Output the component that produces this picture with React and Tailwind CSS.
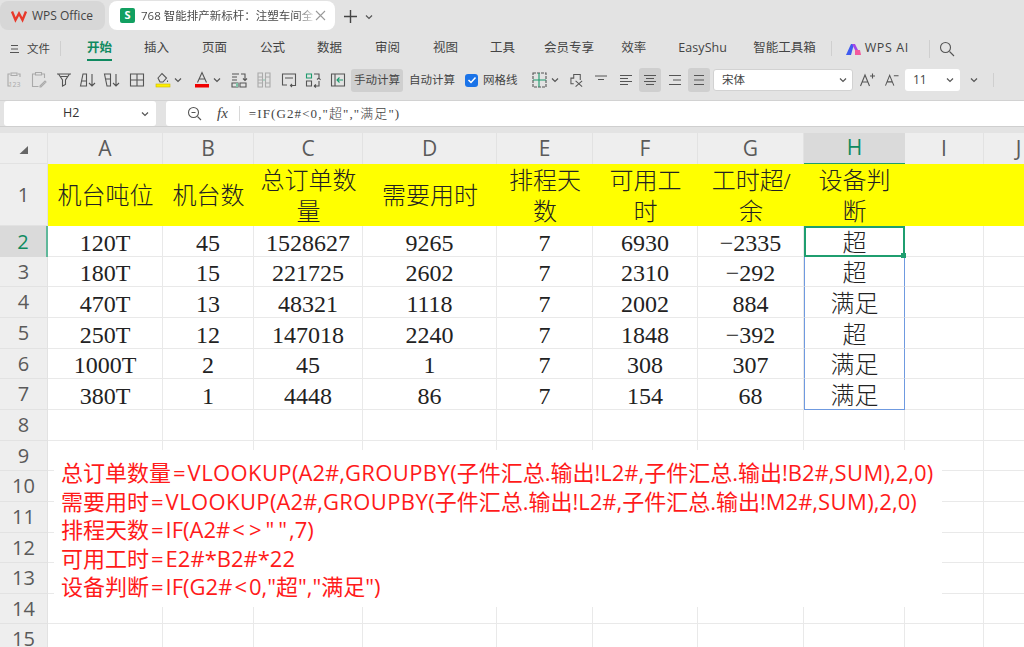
const uiFont = "font-['Open_Sans','Noto_Sans_CJK_SC',sans-serif]";
const cellFont = "font-['Liberation_Serif','Noto_Sans_CJK_SC',serif]";

const menus = [
  ["插入", "ml-[32px]"],
  ["页面", "ml-[33px]"],
  ["公式", "ml-[33px]"],
  ["数据", "ml-[32px]"],
  ["审阅", "ml-[33px]"],
  ["视图", "ml-[33px]"],
  ["工具", "ml-[32px]"],
  ["会员专享", "ml-[29px]"],
  ["效率", "ml-[27px]"],
  ["EasyShu", "ml-[32px] tracking-[0.1px]"],
  ["智能工具箱", "ml-[26px]"],
];

const columns = ["A", "B", "C", "D", "E", "F", "G", "H", "I", "J"];
const headers = ["机台吨位", "机台数", "总订单数量", "需要用时", "排程天数", "可用工时", "工时超/余", "设备判断"];
const rows = [
  ["120T", "45", "1528627", "9265", "7", "6930", "−2335", "超"],
  ["180T", "15", "221725", "2602", "7", "2310", "−292", "超"],
  ["470T", "13", "48321", "1118", "7", "2002", "884", "满足"],
  ["250T", "12", "147018", "2240", "7", "1848", "−392", "超"],
  ["1000T", "2", "45", "1", "7", "308", "307", "满足"],
  ["380T", "1", "4448", "86", "7", "154", "68", "满足"],
];

function Glyph({ children, className = "", size = 18 }) {
  return (
    <svg
      width={size}
      height={size}
      viewBox="0 0 18 18"
      fill="none"
      stroke="currentColor"
      strokeWidth="1.1"
      className={className}
    >
      {children}
    </svg>
  );
}

function Tool({ className = "", children }) {
  return <div className={`flex h-[24px] shrink-0 items-center justify-center text-[#555] ${className}`}>{children}</div>;
}

function Caret({ className = "" }) {
  return (
    <svg width="8" height="6" viewBox="0 0 8 6" fill="none" stroke="currentColor" strokeWidth="1.2" className={`shrink-0 text-[#555] ${className}`}>
      <path d="M1 1.500 4 4.500 7 1.500" />
    </svg>
  );
}

function Toolbar() {
  return (
    <div className={`flex h-[36px] items-center pb-[4px] pl-[2px] text-[12px] text-[#444] ${uiFont}`}>
      <Tool className="w-[24px] text-[#aaa]">
        <Glyph>
          <path d="M5 3H3v12h2M13 3h2v3M6 2h6v2.500H6z" />
          <text x="3.500" y="15.500" fontSize="7" fill="currentColor" stroke="none">123</text>
        </Glyph>
      </Tool>
      <Tool className="w-[25px] text-[#aaa]">
        <Glyph>
          <path d="M5 3H2.500v12.500h6M12 3h2.500v4M5.500 1.500h6V4h-6zM10 15l5-5 1 1-5 5h-1z" />
        </Glyph>
      </Tool>
      <Tool className="w-[25px]">
        <Glyph>
          <path d="M2 3h14M3.500 3 7.500 9v6l3-1.500V9l4-6M5.500 5.500h7" />
        </Glyph>
      </Tool>
      <Tool className="w-[24px]">
        <Glyph>
          <path d="M1.500 15 4 3h3.500v12zM1.500 15h6M2.800 10h4.500M13 3v12M10 12l3 3 3-3" />
        </Glyph>
      </Tool>
      <Tool className="w-[24px]">
        <Glyph>
          <path d="M1.500 3h6v12H4zM1.500 3h6M2.800 8h4.500M13 3v12M10 12l3 3 3-3" />
        </Glyph>
      </Tool>
      <Tool className="w-[25px]">
        <Glyph>
          <path d="M2.500 3h13v12h-13zM9 3v12M2.500 9h13" />
        </Glyph>
      </Tool>
      <Tool className="ml-[6px] w-[16px]">
        <svg width="16" height="18" viewBox="0 0 16 18" fill="none" stroke="currentColor" strokeWidth="1.1">
          <path d="M3 7 7 2.500l4.500 4.500-3.500 4H5zM12.500 9.500v1.500" />
          <rect x="1" y="13" width="14" height="3" fill="#ffee00" stroke="#c9b900" strokeWidth="0.6" />
        </svg>
      </Tool>
      <Caret className="ml-[3px]" />
      <Tool className="ml-[10px] w-[20px]">
        <svg width="16" height="18" viewBox="0 0 16 18" fill="none" stroke="currentColor" strokeWidth="1.1">
          <path d="M3.500 11.500 8 1.500l4.500 10M5 8h6" />
          <rect x="1" y="13" width="14" height="3.500" fill="#f00000" stroke="none" />
        </svg>
      </Tool>
      <Caret className="ml-[1px]" />
      <Tool className="ml-[6px] w-[24px]">
        <Glyph>
          <path d="M2 3h7M2 6h5M2 9h5M11 3h4v6M13 7.500 15 9.500 17 7.500M2 12h6v4H2zM10 12h6v4h-6z" />
          <path d="M6 12h2v4H6z" fill="#7fc4a8" stroke="none" />
        </Glyph>
      </Tool>
      <Tool className="w-[25px] text-[#aaa]">
        <Glyph>
          <path d="M3 2h4.500v14H3zM10.500 2H15v14h-4.500zM3 6h4.500M3 9h4.500M3 12h4.500M10.500 6H15M10.500 12H15" />
          <path d="M8 9h2" stroke="#7fc4a8" />
        </Glyph>
      </Tool>
      <Tool className="w-[25px]">
        <Glyph>
          <path d="M7 14H2.500V3h13v8M5 7h8M15.500 11v3.500h-5M12 13l-1.500 1.500L12 16" />
        </Glyph>
      </Tool>
      <Tool className="w-[24px]">
        <Glyph>
          <path d="M2.500 3h5v4h-5z" stroke="#1d9a6c" />
          <path d="M2.500 10h5v5h-5zM10 3h5v4M15 7l-2 1.500M15 7l1.500 2M15 10v5h-5M10 15l2-1.500M10 15l2 1.500" />
        </Glyph>
      </Tool>
      <Tool className="w-[26px]">
        <Glyph>
          <path d="M2.500 3h13v12h-13zM6 3v12" />
          <path d="M14 9H8M10.500 6.500 8 9l2.500 2.500" stroke="#1d9a6c" />
        </Glyph>
      </Tool>
      <button className="flex h-[23px] w-[52px] shrink-0 items-center justify-center whitespace-nowrap rounded-[3px] bg-[#cfcfcf] text-[11.5px]">
        手动计算
      </button>
      <span className="ml-[6px] w-[45px] shrink-0 whitespace-nowrap text-[11.5px]">自动计算</span>
      <span className="ml-[11px] flex h-[13px] w-[13px] shrink-0 items-center justify-center rounded-[3px] bg-[#1a73e8]">
        <svg width="10" height="10" viewBox="0 0 10 10" fill="none" stroke="#fff" strokeWidth="1.5">
          <path d="M1.500 5 4 7.500 8.500 2.500" />
        </svg>
      </span>
      <span className="ml-[5px] w-[34px] shrink-0 whitespace-nowrap text-[11.5px]">网格线</span>
      <Tool className="ml-[15px] w-[15px]">
        <svg width="15" height="16" viewBox="0 0 15 16" fill="none" stroke="currentColor" strokeWidth="1.1">
          <path d="M1 1h13v14H1z" strokeDasharray="3 1" />
          <path d="M7 1v14M1 8h13" stroke="#1d9a6c" />
        </svg>
      </Tool>
      <Caret className="ml-[4px]" />
      <Tool className="ml-[11px] w-[14px]">
        <svg width="15" height="16" viewBox="0 0 15 16" fill="none" stroke="currentColor" strokeWidth="1.1">
          <path d="M4 12H1V6h3V2h7v6M6 9l7 6M13 9l-7 6" />
        </svg>
      </Tool>
      <Tool className="ml-[11px] w-[12px]">
        <svg width="12" height="12" viewBox="0 0 12 12" stroke="currentColor" fill="none"><path d="M0 2h12M3 5.500h6" /></svg>
      </Tool>
      <Tool className="ml-[13px] w-[12px]">
        <svg width="12" height="12" viewBox="0 0 12 12" stroke="currentColor" fill="none"><path d="M0 1.500h12M0 4.500h8M0 7.500h12M0 10.500h8" /></svg>
      </Tool>
      <Tool className="ml-[7px] w-[22px] rounded-[3px] bg-[#cfcfcf]">
        <svg width="12" height="12" viewBox="0 0 12 12" stroke="currentColor" fill="none"><path d="M0 1.500h12M2 4.500h8M0 7.500h12M2 10.500h8" /></svg>
      </Tool>
      <Tool className="ml-[8px] w-[12px]">
        <svg width="12" height="12" viewBox="0 0 12 12" stroke="currentColor" fill="none"><path d="M0 1.500h12M4 6h8M0 10.500h12" /></svg>
      </Tool>
      <Tool className="ml-[7px] w-[22px] rounded-[3px] bg-[#cfcfcf]">
        <svg width="12" height="12" viewBox="0 0 12 12" stroke="currentColor" fill="none"><path d="M1 1.500h10M1 6h10M1 10.500h10" /></svg>
      </Tool>
      <div className="ml-[3px] flex h-[22px] w-[140px] shrink-0 items-center justify-between rounded-[3px] border border-[#d2d2d2] bg-white pl-[8px] pr-[5px] text-[11.5px]">
        宋体
        <Caret />
      </div>
      <Tool className="ml-[7px] w-[15px]">
        <svg width="15" height="16" viewBox="0 0 15 16" fill="none" stroke="currentColor" strokeWidth="1.1">
          <path d="M0.500 14 5 3l4.500 11M2.500 10h5M10 4h5M12.500 1.500v5" />
        </svg>
      </Tool>
      <Tool className="ml-[10px] w-[14px]">
        <svg width="15" height="16" viewBox="0 0 15 16" fill="none" stroke="currentColor" strokeWidth="1.1">
          <path d="M0.500 14 5 3l4.500 11M2.500 10h5M9.500 3.500h5" />
        </svg>
      </Tool>
      <div className="ml-[6px] flex h-[22px] w-[55px] shrink-0 items-center justify-between rounded-[3px] bg-white pl-[8px] pr-[6px] text-[12px]">
        11
        <Caret />
      </div>
      <Caret className="ml-[10px]" />
      <div className="ml-[15px] h-[14px] w-px shrink-0 bg-[#cfcfcf]" />
    </div>
  );
}

function Cell({ children, className = "border-b border-r border-[#e9e9e9]" }) {
  return (
    <div className={`flex items-center justify-center bg-white pt-[4px] text-[24px] font-light leading-[27px] text-[#222] ${className}`}>
      {children}
    </div>
  );
}

function RowLabel({ n, active }) {
  return (
    <div
      className={
        active
          ? `flex items-center justify-center border-r-2 border-[#5fb89a] bg-[#dadada] text-[20px] text-[#0f8a60] ${uiFont}`
          : `flex items-center justify-center border-b border-r border-[#e2e2e2] bg-[#eeeeee] text-[20px] text-[#5a5a5a] ${uiFont}`
      }
    >
      {n}
    </div>
  );
}

// selection styling for column H
function judgeBorder(r) {
  if (r === 0) return "relative border-2 border-[#1f9e6f]";
  if (r === 5) return "border-x border-b border-[#6f9ae0]";
  return "border-x border-b border-x-[#6f9ae0] border-b-[#e9e9e9]";
}

function Wide({ children }) {
  return <span className="tracking-[0.4px]">{children}</span>;
}

function Op({ children }) {
  return <span className="mx-[2px]">{children}</span>;
}

function Sheet() {
  return (
    <div className="relative h-[514px] overflow-hidden">
      <div className="grid grid-cols-[48px_115px_91px_109px_134px_96px_105px_106px_101px_79px_70px] grid-rows-[31px_62px_31px_30px_31px_31px_30px_31px_31px_30px_31px_31px_30px_31px_30px_31px]">
        <div className="flex items-center justify-center border-b border-r border-[#e2e2e2] bg-[#eeeeee]">
          <svg width="12" height="12" viewBox="0 0 12 12" className="mt-[3px]"><path d="M10 2v8H1.500z" fill="#666" /></svg>
        </div>
        {columns.map((c) => (
          <div
            key={c}
            className={
              c === "H"
                ? `flex items-center justify-center border-b border-[#1f9e6f] bg-[#dadada] text-[21px] text-[#0f8a60] ${uiFont}`
                : `flex items-center justify-center border-r border-[#e2e2e2] bg-[#eeeeee] text-[21px] text-[#5a5a5a] ${uiFont}`
            }
          >
            {c}
          </div>
        ))}

        <RowLabel n={1} />
        {headers.map((h) => (
          <div key={h} className={`flex items-center justify-center bg-[#ffff00] px-[5px] pt-[3px] text-center text-[24px] font-light leading-[31px] text-[#222] ${cellFont}`}>
            {h}
          </div>
        ))}
        <div className="bg-[#ffff00]" />
        <div className="bg-[#ffff00]" />

        {rows.map((row, r) => (
          <div key={r} className="contents">
            <RowLabel n={r + 2} active={r === 0} />
            {row.map((v, c) =>
              c === 7 ? (
                <Cell key={c} className={`${cellFont} ${judgeBorder(r)}`}>
                  {v}
                  {r === 0 && <span className="absolute bottom-[-3px] right-[-3px] h-[5px] w-[5px] bg-[#1f9e6f]" />}
                </Cell>
              ) : (
                <Cell key={c} className={`${cellFont} border-b border-r border-[#e9e9e9]`}>
                  {v}
                </Cell>
              )
            )}
            <Cell />
            <Cell />
          </div>
        ))}

        {[8, 9, 10, 11, 12, 13, 14, 15].map((n) => (
          <div key={n} className="contents">
            <RowLabel n={n} />
            {columns.map((c) => (
              <Cell key={c} />
            ))}
          </div>
        ))}
      </div>

      {/* text box floating over the cells */}
      <div className={`absolute left-[54px] top-[317px] h-[157px] w-[888px] bg-white pl-[7px] pt-[8px] text-[22px] leading-[28.6px] text-[#ff1a1a] ${uiFont}`}>
        <div className="whitespace-nowrap">
          总订单数量<Op>=</Op><Wide>VLOOKUP</Wide>(A2#,<Wide>GROUPBY</Wide>(子件汇总.输出!L2#,子件汇总.输出!B2#,<Wide>SUM</Wide>),2,0)
        </div>
        <div className="whitespace-nowrap">
          需要用时<Op>=</Op><Wide>VLOOKUP</Wide>(A2#,<Wide>GROUPBY</Wide>(子件汇总.输出!L2#,子件汇总.输出!M2#,<Wide>SUM</Wide>),2,0)
        </div>
        <div className="whitespace-nowrap">
          排程天数<Op>=</Op>IF(A2#<Op>&lt;</Op><Op>&gt;</Op><Op>"</Op><Op>"</Op>,7)
        </div>
        <div className="whitespace-nowrap">
          可用工时<Op>=</Op>E2#*B2#*22
        </div>
        <div className="whitespace-nowrap">
          设备判断<Op>=</Op>IF(G2#<Op>&lt;</Op>0,"超","满足")
        </div>
      </div>
    </div>
  );
}

export default function App() {
  return (
    <div className="h-[647px] w-[1024px] overflow-hidden bg-[#e3e3e3]">
      {/* title tabs */}
      <div className={`flex h-[33px] items-start pt-[1px] ${uiFont}`}>
        <div className="flex h-[29px] w-[105px] items-center rounded-lg bg-[#d7d7d7] pl-[11px] text-[12px] text-[#444]">
          <svg width="16" height="14" viewBox="0 0 16 14" fill="none" stroke="#e8392b" strokeWidth="2.400">
            <path d="M1 2.500 4.500 11 8 4.500 11.500 11 15 2.500" />
          </svg>
          <span className="ml-[5px] whitespace-nowrap">WPS Office</span>
        </div>
        <div className="ml-[4px] flex h-[29px] w-[226px] items-center rounded-lg bg-white pl-[11px] text-[11.5px] text-[#444]">
          <span className="flex h-[15px] w-[15px] shrink-0 items-center justify-center rounded-[2px] bg-[#12a061] text-[11px] font-bold text-white">S</span>
          <span className="ml-[6px] w-[172px] overflow-hidden whitespace-nowrap bg-gradient-to-r from-[#444] from-90% to-[#dddddd] bg-clip-text text-transparent">
            768 智能排产新标杆：注塑车间全
          </span>
          <svg width="11" height="11" viewBox="0 0 11 11" stroke="#9a9a9a" strokeWidth="1.100" className="ml-[2px] shrink-0">
            <path d="M1 1l9 9M10 1l-9 9" />
          </svg>
        </div>
        <svg width="15" height="15" viewBox="0 0 15 15" stroke="#444" strokeWidth="1.400" className="ml-[8px] mt-[8px]">
          <path d="M7.500 1v13M1 7.500h13" />
        </svg>
        <Caret className="ml-[7px] mt-[13px]" />
      </div>

      {/* ribbon tabs */}
      <div className={`flex h-[31px] items-center text-[12.5px] text-[#444] ${uiFont}`}>
        <svg width="10" height="10" viewBox="0 0 10 10" stroke="#555" className="ml-[10px]">
          <path d="M1 1.500h7M1 5h7M0 8.500h9" />
        </svg>
        <span className="ml-[7px] w-[22px] whitespace-nowrap text-[11.5px]">文件</span>
        <div className="ml-[11px] h-[15px] w-px bg-[#cfcfcf]" />
        <div className="relative ml-[26px] flex h-[31px] w-[25px] items-center whitespace-nowrap font-bold text-[#0f8a60]">
          开始
          <span className="absolute bottom-[3px] left-0 h-[2px] w-[25px] bg-[#0f8a60]" />
        </div>
        {menus.map(([m, gap]) => (
          <span key={m} className={`whitespace-nowrap ${gap}`}>{m}</span>
        ))}
        <div className="ml-[15px] h-[15px] w-px bg-[#cfcfcf]" />
        <svg width="15" height="12" viewBox="0 0 15 12" className="ml-[14px]">
          <path d="M0 12 5 1h3L5 12z" fill="#3f5bf0" />
          <path d="M6 1h3l3 6H9z" fill="#a347e8" />
          <path d="M9 7h5l1 5H9z" fill="#f45a9e" />
        </svg>
        <span className="ml-[4px] whitespace-nowrap tracking-[0.6px]">WPS AI</span>
        <div className="ml-[20px] h-[18px] w-px bg-[#cfcfcf]" />
        <svg width="16" height="16" viewBox="0 0 16 16" fill="none" stroke="#555" strokeWidth="1.100" className="ml-[9px]">
          <circle cx="6.500" cy="6.500" r="5" />
          <path d="m10.500 10.500 4.500 4.500" />
        </svg>
      </div>

      <Toolbar />

      {/* formula bar */}
      <div className="h-[33px] border-t border-[#d2d2d2]">
        <div className="flex h-[26px] items-stretch border-b border-[#cfcfcf] bg-[#e3e3e3]">
          <div className={`ml-[4px] flex w-[152px] items-center rounded-[3px] bg-white pl-[59px] pr-[7px] text-[12.5px] text-[#333] ${uiFont}`}>
            <span className="flex-1">H2</span>
            <Caret />
          </div>
          <div className="ml-[10px] flex flex-1 items-center rounded-l-[3px] bg-white pl-[21px]">
            <svg width="15" height="15" viewBox="0 0 15 15" fill="none" stroke="#555" strokeWidth="1.100" className="shrink-0">
              <circle cx="6.500" cy="6.500" r="5" />
              <path d="M4.500 6.500h4M10.500 10.500l3.500 3.500" />
            </svg>
            <span className="ml-[15px] font-['Liberation_Serif',serif] text-[15px] italic text-[#444]">fx</span>
            <div className="ml-[11px] h-[15px] w-px bg-[#d8d8d8]" />
            <span className={`ml-[9px] whitespace-nowrap text-[13px] font-light tracking-[1.1px] text-[#444] ${cellFont}`}>
              =IF(G2#&lt;0,"超","满足")
            </span>
          </div>
        </div>
      </div>

      <Sheet />
    </div>
  );
}
